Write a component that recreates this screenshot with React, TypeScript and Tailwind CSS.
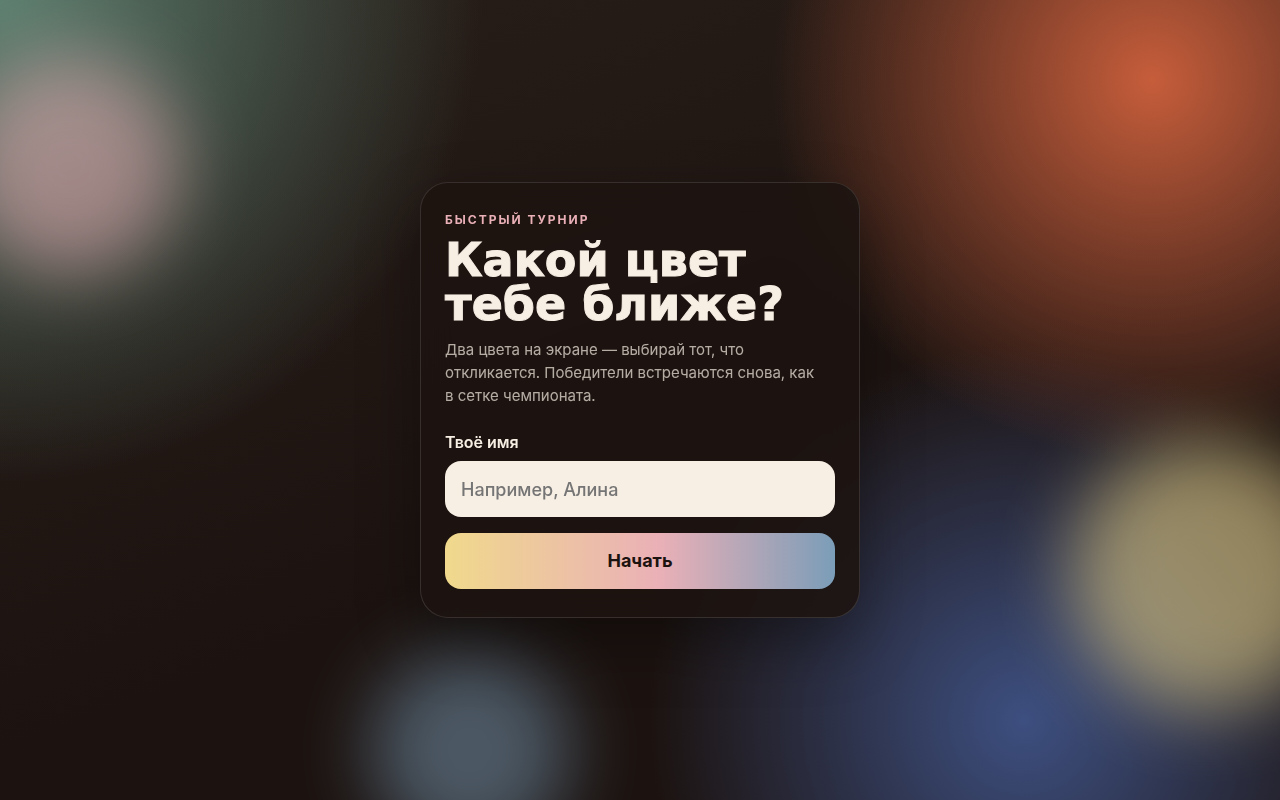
import React, { useState } from 'react';

const blobs = [
  "-left-[40px] top-[55px] h-[220px] w-[220px] bg-[#eab0b7] opacity-55",
  "-right-[60px] top-[440px] h-[270px] w-[270px] bg-[#f0d98c] opacity-55",
  "left-[370px] -bottom-[50px] h-[200px] w-[200px] bg-[#7b9db8] opacity-50"
];

const App = () => {
  const [name, setName] = useState('');

  return (
    <main className="relative flex min-h-screen items-center justify-center overflow-hidden bg-[radial-gradient(circle_at_0%_0%,#5d8070_0%,transparent_32%),radial-gradient(circle_at_90%_10%,#c65d3b_0%,transparent_28%),radial-gradient(circle_at_80%_90%,#3d4f80_0%,transparent_30%),linear-gradient(160deg,#281e19_0%,#1c1310_60%)] p-5 font-['Inter','Noto_Sans',sans-serif] text-[#f7eee4]">
      {blobs.map((blob, index) => (
        <div key={index} className={`pointer-events-none absolute rounded-full blur-[36px] ${blob}`}></div>
      ))}

      <section className="relative w-full max-w-[440px] rounded-[28px] border border-white/12 bg-[#1c1310]/88 px-6 py-7 shadow-[0_24px_60px_rgba(0,0,0,0.35)] backdrop-blur-[16px]">
        <p className="mb-2.5 text-xs leading-[17px] font-bold uppercase tracking-[2px] text-[#eab0b7]">Быстрый турнир</p>
        <h1 className="mb-3 font-['DejaVu_Sans',sans-serif] text-[46px] leading-[44px] font-bold [-webkit-text-stroke:1px_#f7eee4]">Какой цвет тебе ближе?</h1>
        <p className="mb-6 pr-3 text-[15px] leading-[23px] text-[#f7eee4]/70">
          Два цвета на экране — выбирай тот, что откликается. Победители встречаются снова, как в сетке чемпионата.
        </p>

        <form className="flex flex-col" onSubmit={(e) => e.preventDefault()}>
          <label htmlFor="name" className="mb-2 text-base leading-[22px] font-semibold">Твоё имя</label>
          <input
            id="name"
            type="text"
            value={name}
            onChange={(e) => setName(e.target.value)}
            placeholder="Например, Алина"
            className="mb-4 h-14 w-full rounded-2xl bg-[#f7eee4] px-4 text-lg font-medium text-[#1c1310] outline-none placeholder:text-[#757575]"
          />
          <button
            type="submit"
            className="h-14 w-full cursor-pointer rounded-2xl bg-[linear-gradient(90deg,#f0d98c_0%,#eab0b7_55%,#7b9db8_100%)] text-lg font-bold text-[#1c1310]"
          >
            Начать
          </button>
        </form>
      </section>
    </main>
  );
};

export default App;
